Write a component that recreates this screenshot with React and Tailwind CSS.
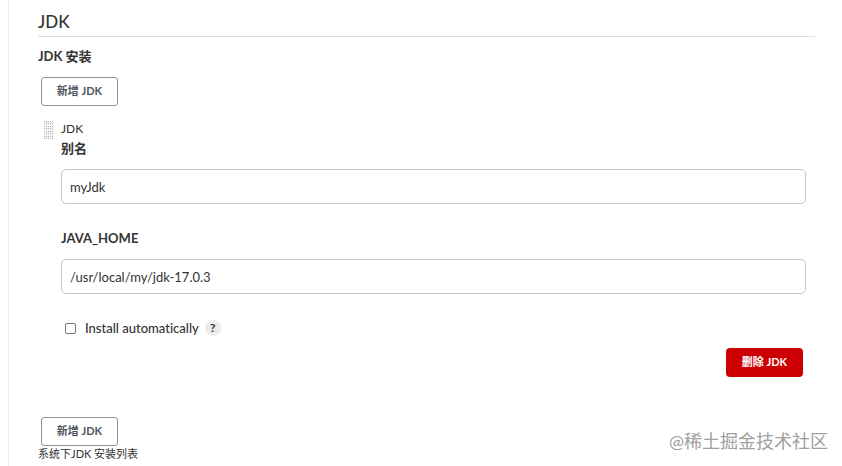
import React, { useState } from 'react';

const gripRows = [0, 2, 5, 7, 10, 12, 15, 17];
const gripCols = [0, 2, 4, 6, 8];

function DragHandle() {
  return (
    <svg width="10" height="18" viewBox="0 0 10 18" className="shrink-0 cursor-move">
      <rect width="10" height="18" fill="#f2f2f2" />
      {gripRows.map((y) =>
        gripCols.map((x) => <rect key={`${x}-${y}`} x={x} y={y} width="1" height="1" fill="#b8b8b8" />)
      )}
    </svg>
  );
}

function AddButton({ onClick }) {
  return (
    <button
      type="button"
      onClick={onClick}
      className="ml-[3px] flex h-[29px] w-[77px] items-center justify-center rounded-[3px] border border-[#8f949b] bg-white text-[11px] font-bold text-[#4d545d]"
    >
      新增 JDK
    </button>
  );
}

function TextField({ id, label, value, onChange }) {
  return (
    <div>
      <label htmlFor={id} className="block text-[13px] leading-[18px] font-bold text-[#333333]">
        {label}
      </label>
      <input
        id={id}
        type="text"
        value={value}
        onChange={(e) => onChange(e.target.value)}
        className="mt-3 block h-[35px] w-full rounded-[5px] border border-[#c3c6ca] bg-white px-2 text-[13px] text-[#333333] focus:outline-none"
      />
    </div>
  );
}

export default function App() {
  const [name, setName] = useState('myJdk');
  const [home, setHome] = useState('/usr/local/my/jdk-17.0.3');
  const [auto, setAuto] = useState(false);

  return (
    <div className="relative ml-2 min-h-screen border-l border-[#ececec] bg-white pl-[29px] pr-[27px] font-['Lato','Noto_Sans_CJK_SC',sans-serif] text-[#333333] [font-variant-ligatures:none]">
      <h2 className="border-b border-[#dcdcdc] pt-[9px] pb-[2px] text-[17px] leading-[25px] font-medium">JDK</h2>
      <h3 className="mt-2.5 mb-3 text-[13px] leading-[18px] font-bold">JDK 安装</h3>
      <AddButton />

      {/* Installation entry */}
      <div className="mt-3.5 flex items-start pl-1.5 pr-[9px]">
        <div className="w-[17px] shrink-0 pt-px">
          <DragHandle />
        </div>
        <div className="min-w-0 grow">
          <p className="text-[12px] leading-[18px]">JDK</p>
          <div className="mt-px flex flex-col gap-[25px]">
            <TextField id="jdk-name" label="别名" value={name} onChange={setName} />
            <TextField id="jdk-home" label="JAVA_HOME" value={home} onChange={setHome} />
          </div>

          <div className="mt-[25px] flex h-[18px] items-center pl-1">
            <input
              id="auto-install"
              type="checkbox"
              checked={auto}
              onChange={(e) => setAuto(e.target.checked)}
              className="size-[11px] appearance-none rounded-[2px] border border-[#767676] bg-white checked:bg-[#0b6aa2]"
            />
            <label htmlFor="auto-install" className="ml-[9px] text-[13px] leading-[18px] font-medium">
              Install automatically
            </label>
            <button
              type="button"
              aria-label="Help"
              className="ml-1.5 flex size-4 items-center justify-center rounded-full bg-[#ececec] text-[12px] font-bold"
            >
              ?
            </button>
          </div>

          <div className="mt-[11px] flex justify-end pr-[3px]">
            <button
              type="button"
              className="flex h-[29px] w-[77px] items-center justify-center rounded-[4px] bg-[#cc0003] text-[11px] font-bold text-white"
            >
              删除 JDK
            </button>
          </div>
        </div>
      </div>

      <div className="mt-10">
        <AddButton />
      </div>
      <p className="text-[11px] leading-4">系统下JDK 安装列表</p>

      {/* Watermark */}
      <span className="pointer-events-none absolute right-3.5 bottom-3 text-[18px] leading-[26px] text-[#a0a0a0]">
        @稀土掘金技术社区
      </span>
    </div>
  );
}
